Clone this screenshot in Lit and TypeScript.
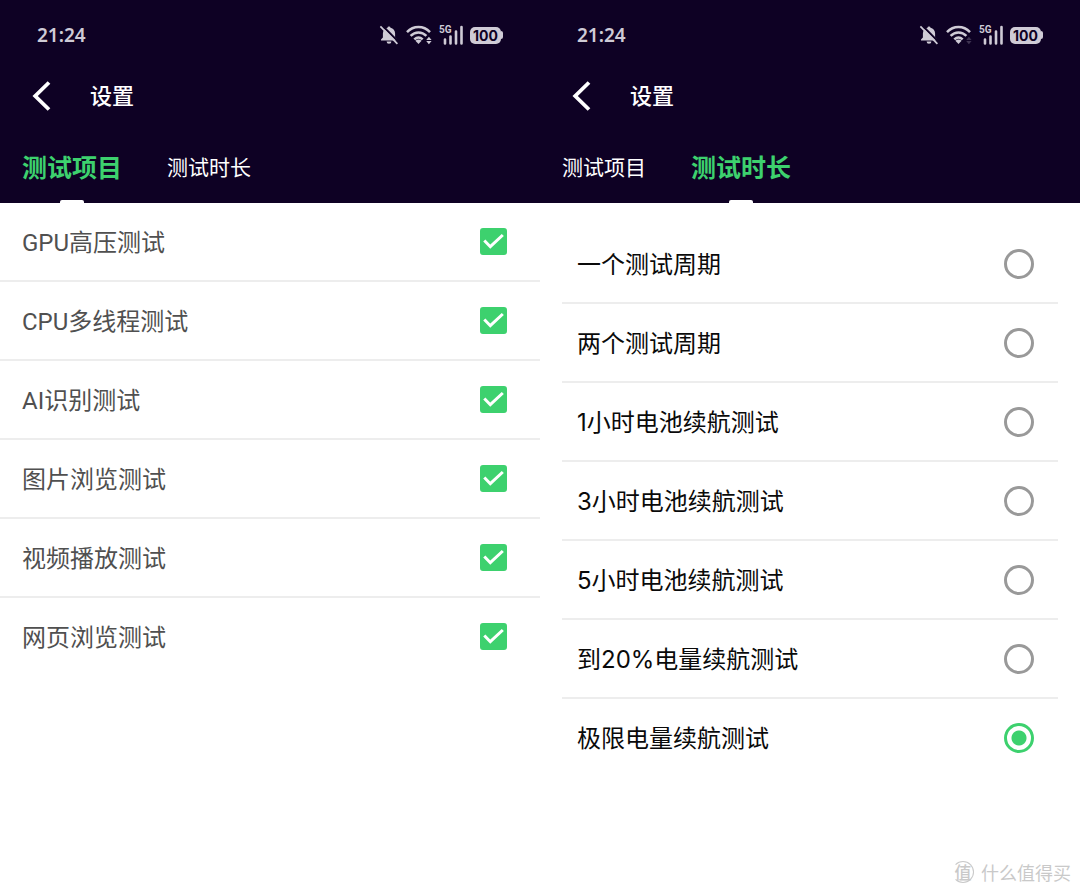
import { LitElement, html, css, svg } from "lit";
import { customElement, property, state } from "lit/decorators.js";
import { classMap } from "lit/directives/class-map.js";

const TABS = ["测试项目", "测试时长"];

const TESTS = ["GPU高压测试", "CPU多线程测试", "AI识别测试", "图片浏览测试", "视频播放测试", "网页浏览测试"];

const DURATIONS = [
  "一个测试周期",
  "两个测试周期",
  "1小时电池续航测试",
  "3小时电池续航测试",
  "5小时电池续航测试",
  "到20%电量续航测试",
  "极限电量续航测试",
];

@customElement("status-bar")
class StatusBar extends LitElement {
  @property({ type: Boolean }) traffic = false;

  static styles = css`
    :host {
      display: flex;
      align-items: center;
      justify-content: space-between;
      height: 70px;
      padding: 0 37px;
      color: #cfcbd6;
    }
    .time {
      font: 600 19px/24px "Noto Sans", "Noto Sans CJK SC", sans-serif;
    }
    .icons {
      display: flex;
      align-items: center;
      gap: 7px;
    }
    svg {
      display: block;
    }
    .signal {
      display: grid;
      height: 20px;
    }
    .signal > * {
      grid-area: 1 / 1;
    }
    .gen {
      font: 700 10px/10px "Roboto", sans-serif;
    }
    .battery {
      display: flex;
      align-items: center;
    }
    .level {
      width: 31px;
      border-radius: 5px;
      background: #cfcbd6;
      color: #0e0124;
      text-align: center;
      font: 700 14px/17px "Inter", sans-serif;
    }
    .cap {
      width: 2px;
      height: 8px;
      border-radius: 0 2px 2px 0;
      background: #cfcbd6;
    }
  `;

  render() {
    return html`
      <span class="time">21:24</span>
      <div class="icons">
        <svg width="20" height="20" viewBox="0 0 20 20" aria-hidden="true">
          <path
            d="M10 1.400a1.500 1.500 0 0 1 1.500 1.400c2.800.6 4.600 2.800 4.600 5.600v4l1.900 2v1.200H2v-1.200l1.900-2v-4c0-2.800 1.800-5 4.600-5.600A1.500 1.500 0 0 1 10 1.400zM7.600 16.400h4.800a2.400 2.400 0 0 1-4.800 0z"
            fill="currentColor"
          />
          <path d="M2.800 0 20 17.400" stroke="#0e0124" stroke-width="2" />
          <path d="M1.400 1.400 18.400 18.800" stroke="currentColor" stroke-width="1.700" />
        </svg>
        <svg width="26" height="20" viewBox="0 0 26 20" aria-hidden="true">
          <g fill="none" stroke="currentColor" stroke-width="2.500">
            <path d="M1 7.200C7.500.4 17.500.4 24 7.200" />
            <path d="M4.600 10.900c4.600-4.600 11.200-4.600 15.800 0" />
            <path d="M8.300 14.400c2.600-2.400 5.800-2.400 8.400 0" />
          </g>
          <path d="M9.400 15.700c1.800-1.600 4.400-1.600 6.200 0l-3.100 3.300z" fill="currentColor" />
          <g fill="currentColor" opacity=${this.traffic ? 1 : 0.25}>
            <path d="m20.200 14.900 2.700-3.200 2.700 3.200zM20.200 16.100l2.700 3.200 2.700-3.200z" />
          </g>
        </svg>
        <div class="signal">
          <svg width="24" height="20" viewBox="0 0 24 20" aria-hidden="true">
            <path
              d="M6 18.500v-4M11.500 18.500v-7M17 18.500v-12M22.500 18.500V2"
              stroke="currentColor"
              stroke-width="2.600"
              stroke-linecap="round"
            />
          </svg>
          <span class="gen">5G</span>
        </div>
        <div class="battery"><span class="level">100</span><span class="cap"></span></div>
      </div>
    `;
  }
}

@customElement("settings-screen")
class SettingsScreen extends LitElement {
  @property({ type: Number }) tab = 0;
  @property({ type: Boolean }) traffic = false;
  @state() private enabled = TESTS.map(() => true);
  @state() private duration = DURATIONS.length - 1;

  static styles = css`
    :host {
      display: block;
      flex: 1;
      min-width: 0;
      font-family: "Roboto", "Noto Sans CJK SC", sans-serif;
    }
    header {
      background: #0e0124;
      color: #fff;
    }
    button {
      border: 0;
      padding: 0;
      background: none;
      color: inherit;
      font-family: inherit;
      cursor: pointer;
    }
    .title {
      display: flex;
      align-items: center;
      height: 52px;
      padding-left: 32px;
      gap: 39px;
    }
    .back svg {
      display: block;
    }
    h1 {
      margin: 0;
      padding-top: 2px;
      font-size: 22px;
      line-height: 32px;
      font-weight: 500;
    }
    .tabs {
      display: flex;
      gap: 45px;
      height: 81px;
      padding: 0 22px;
    }
    .tab {
      display: flex;
      flex-direction: column;
      align-items: center;
      font-size: 21px;
      line-height: 92px;
      white-space: nowrap;
    }
    .tab span {
      height: 78px;
    }
    .tab.active {
      color: #3dd16e;
      font-size: 25px;
      line-height: 94px;
      font-weight: 700;
    }
    .tab.active::after {
      content: "";
      width: 24px;
      height: 3px;
      border-radius: 2px 2px 0 0;
      background: #fff;
    }
    ul {
      list-style: none;
      margin: 0;
      padding: 0;
    }
    .durations {
      margin: 22px 22px 0;
      font-family: "Inter", "Noto Sans CJK SC", sans-serif;
    }
    label {
      display: flex;
      align-items: center;
      justify-content: space-between;
      box-sizing: border-box;
      height: 79px;
      padding: 0 33px 0 22px;
      border-bottom: 2px solid #ededed;
      color: #505050;
      font-size: 24px;
      line-height: 36px;
    }
    .name {
      padding-top: 2px;
    }
    .durations label {
      padding: 0 24px 0 15px;
      color: #0a0a0a;
    }
    li:last-child label {
      border-bottom-color: transparent;
    }
    input {
      appearance: none;
      margin: 0;
      flex: none;
    }
    .check {
      display: grid;
    }
    .check > * {
      grid-area: 1 / 1;
    }
    .check input {
      width: 27px;
      height: 27px;
      border: 2px solid #999;
      border-radius: 3px;
    }
    .check input:checked {
      border-color: #3dd16e;
      background: #3dd16e;
    }
    .check svg {
      pointer-events: none;
    }
    .check input:not(:checked) + svg {
      visibility: hidden;
    }
    .radio {
      display: block;
      box-sizing: border-box;
      width: 30px;
      height: 30px;
      border: 3px solid #999;
      border-radius: 50%;
    }
    .radio:checked {
      border-color: #3dd16e;
      background: radial-gradient(circle, #3dd16e 7px, transparent 8px);
    }
  `;

  private toggle(index: number) {
    this.enabled = this.enabled.map((on, i) => (i === index ? !on : on));
  }

  private renderTests() {
    return html`<ul>
      ${TESTS.map(
        (name, i) => html`<li>
          <label>
            <span class="name">${name}</span>
            <span class="check">
              <input type="checkbox" .checked=${this.enabled[i]} @change=${() => this.toggle(i)} />
              <svg width="27" height="27" viewBox="0 0 27 27" aria-hidden="true">
                ${svg`<path d="M4.300 12.500l6 6.200L22.800 7" fill="none" stroke="#fff" stroke-width="3" />`}
              </svg>
            </span>
          </label>
        </li>`
      )}
    </ul>`;
  }

  private renderDurations() {
    return html`<ul class="durations">
      ${DURATIONS.map(
        (name, i) => html`<li>
          <label>
            <span class="name">${name}</span>
            <input
              class="radio"
              type="radio"
              name="duration"
              .checked=${this.duration === i}
              @change=${() => (this.duration = i)}
            />
          </label>
        </li>`
      )}
    </ul>`;
  }

  render() {
    return html`
      <header>
        <status-bar ?traffic=${this.traffic}></status-bar>
        <div class="title">
          <button class="back" aria-label="返回">
            <svg width="19" height="30" viewBox="0 0 19 30" aria-hidden="true">
              <path d="M17 1.500 3.200 15 17 28.500" fill="none" stroke="#fff" stroke-width="3.800" />
            </svg>
          </button>
          <h1>设置</h1>
        </div>
        <nav class="tabs">
          ${TABS.map(
            (name, i) => html`<button
              class=${classMap({ tab: true, active: this.tab === i })}
              @click=${() => (this.tab = i)}
            ><span>${name}</span></button>`
          )}
        </nav>
      </header>
      ${this.tab === 0 ? this.renderTests() : this.renderDurations()}
    `;
  }
}

@customElement("app-root")
class AppRoot extends LitElement {
  static styles = css`
    :host {
      display: flex;
      position: relative;
      min-height: 100vh;
      background: #fff;
    }
    .watermark {
      position: absolute;
      right: 9px;
      bottom: 9px;
      display: flex;
      align-items: center;
      gap: 7px;
      color: #c9c9c9;
      font: 400 18px/28px "Noto Sans CJK SC", sans-serif;
    }
    .seal {
      box-sizing: border-box;
      width: 22px;
      height: 22px;
      border: 1px solid #c9c9c9;
      border-left-color: transparent;
      border-radius: 50%;
      text-align: center;
      font-size: 17px;
      line-height: 19px;
      font-weight: 500;
    }
  `;

  render() {
    return html`
      <settings-screen .tab=${0} traffic></settings-screen>
      <settings-screen .tab=${1}></settings-screen>
      <div class="watermark"><span class="seal">值</span><span>什么值得买</span></div>
    `;
  }
}
